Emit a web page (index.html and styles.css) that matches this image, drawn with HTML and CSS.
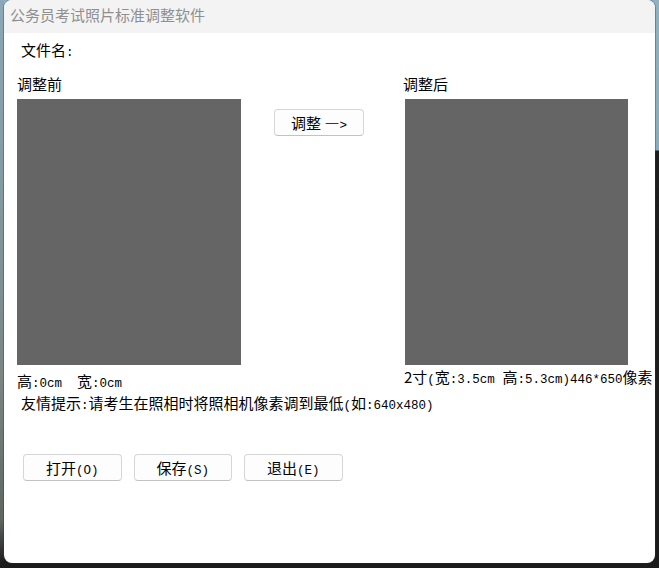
FILE: index.html
```html
<!DOCTYPE html>
<html lang="zh-CN">
<head>
<meta charset="utf-8">
<title>公务员考试照片标准调整软件</title>
<link rel="stylesheet" href="styles.css">
</head>
<body>
<div class="desktop">
  <div class="window">
    <div class="titlebar">公务员考试照片标准调整软件</div>
    <div class="content">
      <div class="filename">文件名<span class="a">:</span></div>
      <div class="panels">
        <div class="panel">
          <div class="label">调整前</div>
          <div class="photo"></div>
          <div class="caption left-caption">高<span class="a">:0cm&nbsp;&nbsp;</span>宽<span class="a">:0cm</span></div>
        </div>
        <div class="middle">
          <button class="btn adjust">调整 —<span class="a">&gt;</span></button>
        </div>
        <div class="panel">
          <div class="label">调整后</div>
          <div class="photo photo-right"></div>
          <div class="caption right-caption">2寸<span class="a">(</span>宽<span class="a">:3.5cm&nbsp;</span>高<span class="a">:5.3cm)446*650</span>像素</div>
        </div>
      </div>
      <div class="tip">友情提示<span class="a">:</span>请考生在照相时将照相机像素调到最低<span class="a">(</span>如<span class="a">:640x480)</span></div>
      <div class="actions">
        <button class="btn action">打开<span class="a">(O)</span></button>
        <button class="btn action">保存<span class="a">(S)</span></button>
        <button class="btn action">退出<span class="a">(E)</span></button>
      </div>
    </div>
  </div>
</div>
</body>
</html>
```

FILE: styles.css
```css
html, body {
  margin: 0;
  padding: 0;
}

body {
  width: 659px;
  height: 568px;
  overflow: hidden;
  font-family: "Noto Sans CJK SC", "Noto Sans", sans-serif;
  font-size: 15px;
  color: #000;
  background:
    linear-gradient(#8aa8b8 0, #82999f 200px, #7a8583 380px, #5f6660 520px, #1c1c1c 563px) left top / 4px 100% no-repeat,
    linear-gradient(#8fb1c2 0, #8bacbd 150px, #1e1e1e 151px, #1b1b1b 100%);
}

.desktop {
  height: 568px;
  padding-left: 4px;
  box-sizing: border-box;
}

.window {
  width: 651px;
  height: 563px;
  background: #ffffff;
  border-radius: 8px;
  overflow: hidden;
  box-shadow: 0 0 0 1px rgba(40, 50, 55, 0.35);
  display: flex;
  flex-direction: column;
}

.titlebar {
  height: 33px;
  flex: none;
  background: #f3f3f3;
  color: #8f8f8f;
  font-size: 15px;
  line-height: 30px;
  padding-left: 6px;
  box-sizing: border-box;
}

.content {
  padding: 8px 0 0 13px;
}

.a {
  font-family: "Liberation Mono", "DejaVu Sans Mono", monospace;
  font-size: 12.5px;
  line-height: 1;
}

.filename,
.label,
.caption,
.tip {
  height: 18px;
  line-height: 18px;
  white-space: nowrap;
}

.filename {
  margin-left: 4px;
}

.panels {
  display: flex;
  align-items: flex-start;
  margin-top: 16px;
}

.panel {
  display: flex;
  flex-direction: column;
}

.photo {
  width: 224px;
  height: 266px;
  background: #656565;
  margin-top: 6px;
}

.photo-right {
  width: 223px;
  margin-left: 2px;
}

.left-caption {
  margin-top: 7px;
}

.right-caption {
  margin-top: 3px;
  margin-left: 1px;
}

.middle {
  padding-top: 34px;
  margin-left: 33px;
  margin-right: 39px;
}

.btn {
  display: block;
  font-family: "Noto Sans CJK SC", "Noto Sans", sans-serif;
  font-size: 15px;
  color: #000;
  background: #fdfdfd;
  border: 1px solid #d6d6d6;
  border-bottom-color: #c2c2c2;
  border-radius: 4px;
  height: 27px;
  padding: 0;
  line-height: 24px;
  text-align: center;
  white-space: nowrap;
  box-sizing: border-box;
}

.adjust {
  width: 90px;
}

.tip {
  margin-top: 4px;
  margin-left: 4px;
}

.actions {
  display: flex;
  gap: 12px;
  margin-top: 42px;
  margin-left: 6px;
}

.action {
  width: 98.5px;
}
```
